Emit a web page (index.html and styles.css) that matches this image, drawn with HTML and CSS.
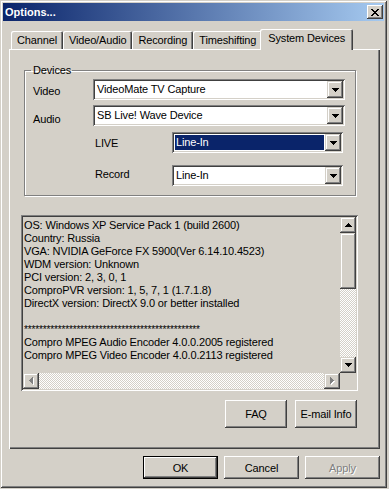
FILE: index.html
```html
<!DOCTYPE html>
<html lang="en">
<head>
    <meta charset="UTF-8">
    <title>Options...</title>
    <link rel="stylesheet" href="styles.css">
</head>
<body>
    <div class="window">
        <div class="titlebar">
            <span class="title">Options...</span>
            <span class="close">
                <svg width="8" height="7" viewBox="0 0 8 7"><path d="M0 0h2v1H0zM6 0h2v1H6zM1 1h2v1H1zM5 1h2v1H5zM2 2h4v1H2zM3 3h2v1H3zM2 4h4v1H2zM1 5h2v1H1zM5 5h2v1H5zM0 6h2v1H0zM6 6h2v1H6z"/></svg>
            </span>
        </div>

        <div class="dialog">
            <div class="tabs">
                <div class="tab">Channel</div>
                <div class="tab">Video/Audio</div>
                <div class="tab">Recording</div>
                <div class="tab">Timeshifting</div>
                <div class="tab active">System Devices</div>
            </div>

            <div class="panel">
                <fieldset class="group">
                    <legend>Devices</legend>
                    <div class="row">
                        <label class="lbl-video">Video</label>
                        <div class="combo">
                            <span class="combo-value">VideoMate TV Capture</span>
                            <span class="combo-btn"><svg width="7" height="4"><path d="M0 0h7v1H0zM1 1h5v1H1zM2 2h3v1H2zM3 3h1v1H3z"/></svg></span>
                        </div>
                    </div>
                    <div class="row row-audio">
                        <label class="lbl-audio">Audio</label>
                        <div class="combo">
                            <span class="combo-value">SB Live! Wave Device</span>
                            <span class="combo-btn"><svg width="7" height="4"><path d="M0 0h7v1H0zM1 1h5v1H1zM2 2h3v1H2zM3 3h1v1H3z"/></svg></span>
                        </div>
                    </div>
                    <div class="row sub row-live">
                        <label class="lbl-live">LIVE</label>
                        <div class="combo">
                            <span class="combo-value selected">Line-In</span>
                            <span class="combo-btn"><svg width="7" height="4"><path d="M0 0h7v1H0zM1 1h5v1H1zM2 2h3v1H2zM3 3h1v1H3z"/></svg></span>
                        </div>
                    </div>
                    <div class="row sub row-record">
                        <label class="lbl-record">Record</label>
                        <div class="combo">
                            <span class="combo-value">Line-In</span>
                            <span class="combo-btn"><svg width="7" height="4"><path d="M0 0h7v1H0zM1 1h5v1H1zM2 2h3v1H2zM3 3h1v1H3z"/></svg></span>
                        </div>
                    </div>
                </fieldset>

                <div class="info">
                    <div class="info-text">
                        <div>OS: Windows XP Service Pack 1 (build 2600)</div>
                        <div>Country: Russia</div>
                        <div>VGA: NVIDIA GeForce FX 5900(Ver 6.14.10.4523)</div>
                        <div>WDM version: Unknown</div>
                        <div>PCI version: 2, 3, 0, 1</div>
                        <div>ComproPVR version: 1, 5, 7, 1 (1.7.1.8)</div>
                        <div>DirectX version: DirectX 9.0 or better installed</div>
                        <div>&nbsp;</div>
                        <div class="stars">***********************************************</div>
                        <div>Compro MPEG Audio Encoder 4.0.0.2005 registered</div>
                        <div>Compro MPEG Video Encoder 4.0.0.2113 registered</div>
                    </div>
                    <div class="vscroll">
                        <span class="sb-btn"><svg width="7" height="4"><path d="M3 0h1v1H3zM2 1h3v1H2zM1 2h5v1H1zM0 3h7v1H0z"/></svg></span>
                        <span class="sb-thumb"></span>
                        <span class="sb-track"></span>
                        <span class="sb-btn"><svg width="7" height="4"><path d="M0 0h7v1H0zM1 1h5v1H1zM2 2h3v1H2zM3 3h1v1H3z"/></svg></span>
                    </div>
                    <div class="hscroll">
                        <span class="sb-btn"><svg width="5" height="8"><path fill="#fff" d="M4 1h1v7H4zM3 2h1v5H3zM2 3h1v3H2zM1 4h1v1H1z"/><path fill="#808080" d="M3 0h1v7H3zM2 1h1v5H2zM1 2h1v3H1zM0 3h1v1H0z"/></svg></span>
                        <span class="sb-track"></span>
                        <span class="sb-btn"><svg width="5" height="8"><path fill="#fff" d="M1 1h1v7H1zM2 2h1v5H2zM3 3h1v3H3zM4 4h1v1H4z"/><path fill="#808080" d="M0 0h1v7H0zM1 1h1v5H1zM2 2h1v3H2zM3 3h1v1H3z"/></svg></span>
                    </div>
                    <div class="corner"></div>
                </div>

                <div class="panel-buttons">
                    <span class="btn btn-tall">FAQ</span>
                    <span class="btn btn-tall">E-mail Info</span>
                </div>
            </div>

            <div class="dialog-buttons">
                <span class="btn btn-default">OK</span>
                <span class="btn">Cancel</span>
                <span class="btn disabled">Apply</span>
            </div>
        </div>
    </div>
</body>
</html>
```

FILE: styles.css
```css
body {
    margin: 0;
    background: #d4d0c8;
    font-family: "Liberation Sans", Arial, sans-serif;
    font-size: 11px;
    letter-spacing: -0.15px;
    color: #000;
}

/* window frame */
.window {
    box-sizing: border-box;
    width: 387px;
    height: 488px;
    padding: 3px;
    background: #d4d0c8;
    box-shadow: inset 1px 1px #d4d0c8, inset -1px -1px #404040, inset 2px 2px #fff, inset -2px -2px #808080;
}
.titlebar {
    display: flex;
    align-items: center;
    justify-content: space-between;
    height: 18px;
    padding: 0 1px 0 2px;
    background: linear-gradient(to right, #0a246a, #a6caf0);
}
.title {
    color: #fff;
    font-weight: bold;
    letter-spacing: 0;
}
.close {
    display: flex;
    align-items: center;
    justify-content: center;
    width: 16px;
    height: 14px;
    background: #d4d0c8;
    box-shadow: inset -1px -1px #404040, inset 1px 1px #fff, inset -2px -2px #808080;
}

/* tabs */
.dialog {
    padding: 8px 4px 0 6px;
}
.tabs {
    display: flex;
    align-items: flex-end;
    height: 20px;
    padding-left: 2px;
    position: relative;
    z-index: 1;
}
.tab {
    height: 18px;
    line-height: 18px;
    padding: 0 6px;
    border-radius: 2px 2px 0 0;
    box-shadow: inset 1px 1px #fff, inset -1px 0 #404040, inset -2px 0 #808080;
}
.tab.active {
    height: 21px;
    line-height: 19px;
    margin: 0 -2px -1px;
    padding: 0 8px;
    background: #d4d0c8;
}
.panel {
    box-sizing: border-box;
    height: 400px;
    padding: 15px 22px 0 12px;
    box-shadow: inset 1px 1px #fff, inset -1px -1px #404040, inset -2px -2px #808080;
}

/* devices group */
.group {
    margin: 0 2px 0 3px;
    padding: 2px 10px 9px 8px;
    min-width: 0;
    border: 1px solid #808080;
    box-shadow: inset 1px 1px #fff, 1px 1px #fff;
}
.group legend {
    padding: 0 1px 0 2px;
    margin-left: -2px;
    line-height: 13px;
}
.row {
    display: flex;
    align-items: center;
}
.row label {
    width: 60px;
}
.row-audio { margin-top: 5px; }
.row-live { margin-top: 6px; }
.row-record { margin-top: 12px; }
.row.sub {
    padding-left: 62px;
    margin-right: 2px;
}
.row.sub label {
    width: 77px;
}
.lbl-video { padding-top: 3px; }
.lbl-audio { padding-top: 7px; }
.lbl-live { padding-top: 1px; }
.lbl-record { padding-bottom: 3px; }

.combo {
    flex: 1;
    display: flex;
    box-sizing: border-box;
    height: 21px;
    padding: 2px;
    background: #fff;
    box-shadow: inset 1px 1px #808080, inset -1px -1px #fff, inset 2px 2px #404040, inset -2px -2px #d4d0c8;
}
.combo-value {
    flex: 1;
    padding-left: 2px;
    line-height: 17px;
}
.combo-value.selected {
    margin: 1px;
    padding-left: 1px;
    line-height: 15px;
    background: #0a246a;
    color: #fff;
}
.combo-btn,
.sb-btn {
    display: flex;
    align-items: center;
    justify-content: center;
    width: 16px;
    height: 17px;
    background: #d4d0c8;
    box-shadow: inset -1px -1px #404040, inset 1px 1px #d4d0c8, inset -2px -2px #808080, inset 2px 2px #fff;
}

/* system info box */
.info {
    display: grid;
    grid-template-columns: minmax(0, 1fr) 16px;
    grid-template-rows: minmax(0, 1fr) 16px;
    box-sizing: border-box;
    height: 176px;
    margin-top: 19px;
    padding: 2px;
    box-shadow: inset 1px 1px #808080, inset -1px -1px #fff, inset 2px 2px #404040, inset -2px -2px #d4d0c8;
}
.info-text {
    overflow: hidden;
    padding: 2px 0 0 1px;
    line-height: 13px;
}
.info-text div {
    white-space: nowrap;
}
.stars {
    font-size: 10px;
}
.vscroll {
    display: flex;
    flex-direction: column;
}
.vscroll .sb-btn {
    height: 16px;
}
.sb-thumb {
    height: 56px;
    box-shadow: inset -1px -1px #404040, inset 1px 1px #d4d0c8, inset -2px -2px #808080, inset 2px 2px #fff;
}
.sb-track {
    flex: 1;
    background-image: conic-gradient(#fff 25%, #d4d0c8 0 50%, #fff 0 75%, #d4d0c8 0);
    background-size: 2px 2px;
}
.hscroll {
    display: flex;
}
.hscroll .sb-btn {
    height: 16px;
}

/* buttons */
.panel-buttons {
    display: flex;
    justify-content: flex-end;
    gap: 8px;
    margin-top: 9px;
    padding-right: 1px;
}
.btn {
    display: flex;
    align-items: center;
    justify-content: center;
    box-sizing: border-box;
    width: 75px;
    height: 23px;
    box-shadow: inset -1px -1px #404040, inset 1px 1px #fff, inset -2px -2px #808080, inset 2px 2px #d4d0c8;
}
.btn-tall {
    width: 62px;
    height: 28px;
}
.btn-default {
    box-shadow: inset 0 0 0 1px #000, inset -2px -2px #404040, inset 2px 2px #fff, inset -3px -3px #808080;
}
.btn.disabled {
    color: #808080;
    text-shadow: 1px 1px 0 #fff;
}
.dialog-buttons {
    display: flex;
    justify-content: flex-end;
    gap: 6px;
    margin-top: 7px;
}
```
